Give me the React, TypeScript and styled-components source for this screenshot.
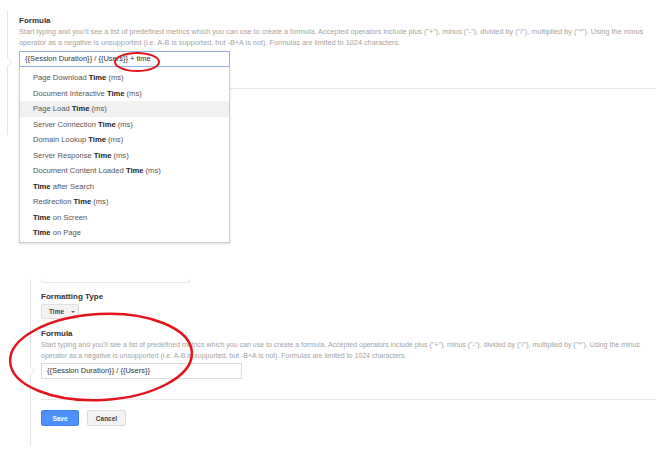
import React from "react";
import styled, { createGlobalStyle } from "styled-components";

const Global = createGlobalStyle`
  html, body { margin: 0; padding: 0; background: #fff; }
  body { font-family: "Liberation Sans", Arial, sans-serif; width: 662px; height: 455px; overflow: hidden; }
`;

const Page = styled.div`
  position: relative;
  width: 662px;
  height: 455px;
  display: flex;
  flex-direction: column;
`;

const Panel = styled.section<{ $left: number; $top: number; $height: number; $notch: number; $pad: number }>`
  position: relative;
  margin-left: ${(p) => p.$left}px;
  margin-top: ${(p) => p.$top}px;
  height: ${(p) => p.$height}px;
  border-left: 1px solid #e6e6e6;
  padding-left: ${(p) => p.$pad}px;
  box-sizing: border-box;
  &::before {
    content: "";
    position: absolute;
    left: -1px;
    top: ${(p) => p.$notch}px;
    width: 0;
    height: 0;
    border-top: 5px solid transparent;
    border-bottom: 5px solid transparent;
    border-left: 5px solid #e6e6e6;
  }
  &::after {
    content: "";
    position: absolute;
    left: -1px;
    top: ${(p) => p.$notch + 1}px;
    width: 0;
    height: 0;
    border-top: 4px solid transparent;
    border-bottom: 4px solid transparent;
    border-left: 4px solid #fff;
  }
`;

const Title = styled.div<{ $size?: number }>`
  font-size: ${(p) => p.$size ?? 8}px;
  font-weight: bold;
  color: #333;
  line-height: 11px;
`;

const Desc = styled.div<{ $size: number }>`
  font-size: ${(p) => p.$size}px;
  color: #a3a3a3;
  line-height: 11px;
  white-space: nowrap;
`;

const Input = styled.div<{ $width: number; $focus?: boolean }>`
  width: ${(p) => p.$width}px;
  height: 16px;
  box-sizing: border-box;
  border: 1px solid ${(p) => (p.$focus ? "#8fb1e8" : "#dcdcdc")};
  font-size: 7.5px;
  color: #333;
  line-height: 14px;
  padding-left: 5px;
  background: #fff;
  white-space: nowrap;
`;

const Divider = styled.div<{ $width: number }>`
  width: ${(p) => p.$width}px;
  height: 1px;
  background: #e8e8e8;
`;

const Menu = styled.ul`
  position: absolute;
  left: 11px;
  top: 57px;
  width: 211px;
  margin: 0;
  padding: 3px 0 1px;
  list-style: none;
  background: #fff;
  border: 1px solid #cfcfcf;
  border-top: none;
  box-shadow: 0 1px 2px rgba(0, 0, 0, 0.15);
  box-sizing: border-box;
`;

const Item = styled.li<{ $active?: boolean }>`
  display: block;
  height: 15.5px;
  line-height: 15.5px;
  padding-left: 13px;
  font-size: 7.6px;
  color: #555;
  white-space: pre;
  background: ${(p) => (p.$active ? "#f1f1f1" : "transparent")};
  b { color: #222; font-weight: bold; }
`;

const SelectButton = styled.div`
  width: 38px;
  height: 15px;
  box-sizing: border-box;
  background: #f3f3f3;
  border: 1px solid #dedede;
  border-radius: 2px;
  display: flex;
  align-items: center;
  padding-left: 7px;
  gap: 7px;
  font-size: 6.5px;
  font-weight: bold;
  color: #444;
`;

const Caret = styled.span`
  width: 0;
  height: 0;
  border-left: 2px solid transparent;
  border-right: 2px solid transparent;
  border-top: 2px solid #666;
`;

const Buttons = styled.div`
  display: flex;
  gap: 8px;
`;

const Button = styled.div<{ $primary?: boolean }>`
  width: ${(p) => (p.$primary ? 38 : 39)}px;
  height: 16px;
  box-sizing: border-box;
  border-radius: 2px;
  display: flex;
  align-items: center;
  justify-content: center;
  font-size: 6.5px;
  font-weight: bold;
  color: ${(p) => (p.$primary ? "#fff" : "#444")};
  background: ${(p) => (p.$primary ? "#4d90fe" : "#f3f3f3")};
  border: 1px solid ${(p) => (p.$primary ? "#3d82f0" : "#dcdcdc")};
`;

const PrevField = styled.div`
  width: 147px;
  height: 3px;
  border: 1px solid #e8e8e8;
  border-top: none;
  border-radius: 0 0 2px 2px;
`;

const Ring = styled.svg`
  position: absolute;
  left: 0;
  top: 0;
  pointer-events: none;
  overflow: visible;
`;

const Spacer = styled.div<{ $h: number }>`
  height: ${(p) => p.$h}px;
  flex: none;
`;

const items: [string, string, string][] = [
  ["Page Download ", "Time", " (ms)"],
  ["Document Interactive ", "Time", " (ms)"],
  ["Page Load ", "Time", " (ms)"],
  ["Server Connection ", "Time", " (ms)"],
  ["Domain Lookup ", "Time", " (ms)"],
  ["Server Response ", "Time", " (ms)"],
  ["Document Content Loaded ", "Time", " (ms)"],
  ["", "Time", " after Search"],
  ["Redirection ", "Time", " (ms)"],
  ["", "Time", " on Screen"],
  ["", "Time", " on Page"],
];

const line1 =
  'Start typing and you\'ll see a list of predefined metrics which you can use to create a formula. Accepted operators include plus ("+"), minus ("-"), divided by ("/"), multiplied by ("*"). Using the minus';
const line2 =
  "operator as a negative is unsupported (i.e. A-B is supported, but -B+A is not). Formulas are limited to 1024 characters.";

export default function App() {
  return (
    <Page>
      <Global />
      <Panel $left={7} $top={10} $height={125} $notch={47} $pad={11}>
        <Spacer $h={5} />
        <Title>Formula</Title>
        <Desc $size={7.3}>{line1}</Desc>
        <Desc $size={7.3}>{line2}</Desc>
        <Spacer $h={3} />
        <Input $width={211} $focus>
          {"{{Session Duration}} / {{Users}} + time"}
        </Input>
        <Spacer $h={21} />
        <Divider $width={637} />
        <Menu>
          {items.map(([a, b, c], i) => (
            <Item key={i} $active={i === 2}>
              {a}
              <b>{b}</b>
              {c}
            </Item>
          ))}
        </Menu>
      </Panel>

      <Spacer $h={144} />

      <Panel $left={30} $top={0} $height={167} $notch={87} $pad={10}>
        <PrevField />
        <Spacer $h={8} />
        <Title $size={8}>Formatting Type</Title>
        <Spacer $h={2} />
        <SelectButton>
          Time <Caret />
        </SelectButton>
        <Spacer $h={9} />
        <Title $size={8}>Formula</Title>
        <Desc $size={7}>{line1}</Desc>
        <Desc $size={7}>{line2}</Desc>
        <Spacer $h={2} />
        <Input $width={201}>{"{{Session Duration}} / {{Users}}"}</Input>
        <Spacer $h={20} />
        <Divider $width={615} />
        <Spacer $h={10} />
        <Buttons>
          <Button $primary>Save</Button>
          <Button>Cancel</Button>
        </Buttons>
      </Panel>

      <Ring width="662" height="455">
        <ellipse cx="137" cy="62" rx="22" ry="9" fill="none" stroke="#e3141b" strokeWidth="2" />
        <ellipse
          cx="101"
          cy="357"
          rx="91"
          ry="43"
          fill="none"
          stroke="#e3141b"
          strokeWidth="2.5"
          transform="rotate(-3 101 357)"
        />
      </Ring>
    </Page>
  );
}
